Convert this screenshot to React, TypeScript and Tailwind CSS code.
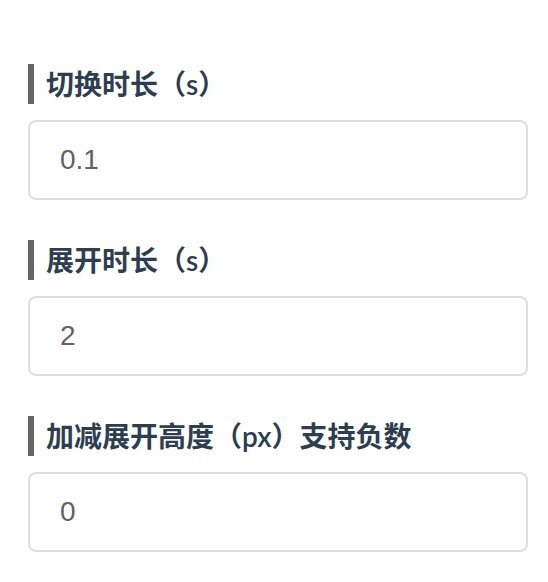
import React from "react";

const fields = [
  { label: "切换时长（s）", value: "0.1" },
  { label: "展开时长（s）", value: "2" },
  { label: "加减展开高度（px）支持负数", value: "0" },
];

export default function App() {
  return (
    <div
      className="w-[548px] h-[582px] bg-white pl-[28px] pt-[64px] flex flex-col gap-[40px]"
      style={{ fontFamily: 'Lato, "Noto Sans CJK SC", sans-serif' }}
    >
      {fields.map((f) => (
        <div key={f.label} className="flex flex-col gap-[16px]">
          <div className="h-[40px] border-l-[6px] border-[#666666] pl-[12px] flex items-center text-[28px] font-semibold text-[#2c3e50] leading-none">
            {f.label}
          </div>
          <div className="w-[500px] h-[80px] border-2 border-[#dcdfe6] rounded-[8px] px-[30px] flex items-center text-[28px] text-[#606266]">
            <span style={{ fontFamily: '"Liberation Sans", Arial, sans-serif' }}>{f.value}</span>
          </div>
        </div>
      ))}
    </div>
  );
}
